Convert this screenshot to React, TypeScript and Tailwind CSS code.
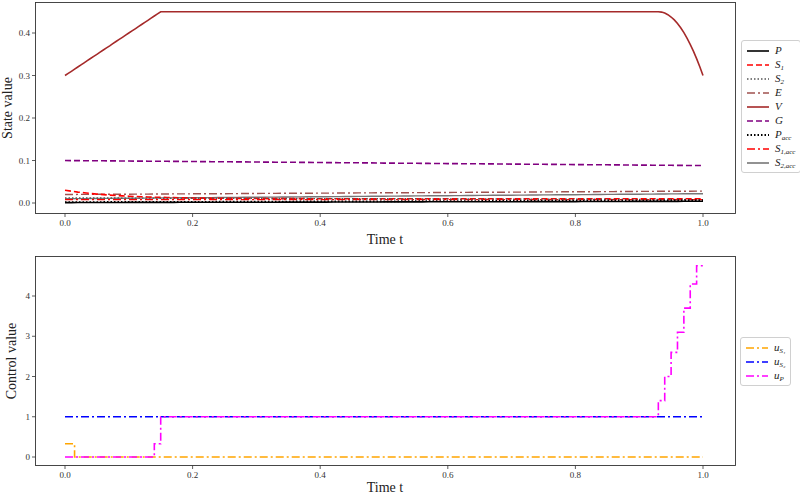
import React from "react";

const X = (t: number) => 65 + t * 638;
const Y1 = (v: number) => 203 - v * 425;
const Y2 = (v: number) => 457 - v * 40.25;

function line(f: (t: number) => number, Y: (v: number) => number, n = 100) {
  const pts: string[] = [];
  for (let i = 0; i <= n; i++) {
    const t = i / n;
    pts.push(`${X(t).toFixed(1)},${Y(f(t)).toFixed(1)}`);
  }
  return pts.join(" ");
}

function steps(s: [number, number][], Y: (v: number) => number) {
  const pts: string[] = [];
  for (let i = 0; i < s.length; i++) {
    const [t, v] = s[i];
    const tn = i + 1 < s.length ? s[i + 1][0] : 1;
    pts.push(`${X(t)},${Y(v)}`, `${X(tn)},${Y(v)}`);
  }
  return pts.join(" ");
}

const V = (t: number) => {
  if (t < 0.15) return 0.3 + t;
  if (t < 0.93) return 0.45;
  const u = (t - 0.93) / 0.07;
  return 0.45 - 0.15 * u * u;
};

const FF = '"Liberation Serif", "DejaVu Serif", serif';
const serif = { fontFamily: FF };

function Legend({ items }: { items: { c: string; d?: string; w?: number; label: React.ReactNode }[] }) {
  return (
    <div className="flex flex-col gap-[1px] rounded-[3px] border border-[#d0d0d0] bg-white px-[5px] py-[3px]" style={serif}>
      {items.map((it, i) => (
        <div key={i} className="flex h-[13px] items-center gap-[6px]">
          <svg width="22" height="6">
            <line x1="0" y1="3" x2="22" y2="3" stroke={it.c} strokeWidth={it.w ?? 1.6} strokeDasharray={it.d} />
          </svg>
          <span className="text-[11px] italic leading-none text-[#222]" style={serif}>{it.label}</span>
        </div>
      ))}
    </div>
  );
}

const sub = (a: string, b: string) => (
  <>
    {a}
    <sub className="text-[7px]" style={serif}>{b}</sub>
  </>
);

export default function App() {
  const yt1 = [0, 0.1, 0.2, 0.3, 0.4];
  const yt2 = [0, 1, 2, 3, 4];
  const xt = [0, 0.2, 0.4, 0.6, 0.8, 1];
  const up: [number, number][] = [
    [0, 0], [0.14, 0.33], [0.15, 1], [0.93, 1.4], [0.94, 2], [0.95, 2.6], [0.96, 3.1], [0.97, 3.7], [0.98, 4.3], [0.99, 4.75],
  ];
  return (
    <div className="relative h-[494px] w-[800px] overflow-hidden bg-white" style={serif}>
      <svg width="800" height="494" className="absolute left-0 top-0" fontFamily={FF} style={serif}>
        <rect x="35.5" y="2.5" width="700" height="211" fill="none" stroke="#333" strokeWidth="0.9" />
        {yt1.map((v) => (
          <g key={v}>
            <line x1="32" x2="35.5" y1={Y1(v)} y2={Y1(v)} stroke="#333" strokeWidth="0.8" />
            <text x="30" y={Y1(v) + 3} textAnchor="end" fontSize="9" fill="#333">{v.toFixed(1)}</text>
          </g>
        ))}
        {xt.map((t) => (
          <g key={t}>
            <line x1={X(t)} x2={X(t)} y1="213.5" y2="217" stroke="#333" strokeWidth="0.8" />
            <text x={X(t)} y="226" textAnchor="middle" fontSize="9" fill="#333">{t.toFixed(1)}</text>
          </g>
        ))}
        <text x="385" y="244" textAnchor="middle" fontSize="14" fill="#222">Time t</text>
        <text x="12" y="108" textAnchor="middle" fontSize="14" fill="#222" transform="rotate(-90 12 108)">State value</text>
        <polyline points={line((t) => 0.1 - 0.012 * t, Y1)} fill="none" stroke="#800080" strokeWidth="1.6" strokeDasharray="6 3" />
        <polyline points={line((t) => 0.02 + 0.008 * t, Y1)} fill="none" stroke="#a0524f" strokeWidth="1.4" strokeDasharray="8 3 2 3" />
        <polyline points={line((t) => 0.01 + 0.012 * t, Y1)} fill="none" stroke="#777" strokeWidth="1.4" />
        <polyline points={line((t) => 0.01 + 0.02 * Math.exp(-t * 12), Y1)} fill="none" stroke="#ff0000" strokeWidth="1.6" strokeDasharray="6 3" />
        <polyline points={line(() => 0.008, Y1)} fill="none" stroke="#ff0000" strokeWidth="1.4" strokeDasharray="8 3 2 3" />
        <polyline points={line((t) => 0.012 - 0.004 * t, Y1)} fill="none" stroke="#555" strokeWidth="1.4" strokeDasharray="1.5 2" />
        <polyline points={line((t) => 0.002 + 0.004 * t, Y1)} fill="none" stroke="#000" strokeWidth="1.8" strokeDasharray="1.5 2" />
        <polyline points={line((t) => 0.001 + 0.003 * t, Y1)} fill="none" stroke="#000" strokeWidth="1.6" />
        <polyline points={line(V, Y1, 200)} fill="none" stroke="#a52a2a" strokeWidth="1.6" />

        <rect x="35.5" y="256.5" width="700" height="209" fill="none" stroke="#333" strokeWidth="0.9" />
        {yt2.map((v) => (
          <g key={v}>
            <line x1="32" x2="35.5" y1={Y2(v)} y2={Y2(v)} stroke="#333" strokeWidth="0.8" />
            <text x="30" y={Y2(v) + 3} textAnchor="end" fontSize="9" fill="#333">{v}</text>
          </g>
        ))}
        {xt.map((t) => (
          <g key={t}>
            <line x1={X(t)} x2={X(t)} y1="465.5" y2="469" stroke="#333" strokeWidth="0.8" />
            <text x={X(t)} y="478" textAnchor="middle" fontSize="9" fill="#333">{t.toFixed(1)}</text>
          </g>
        ))}
        <text x="385" y="492" textAnchor="middle" fontSize="14" fill="#222">Time t</text>
        <text x="16" y="361" textAnchor="middle" fontSize="14" fill="#222" transform="rotate(-90 16 361)">Control value</text>
        <polyline points={steps([[0, 0.33], [0.015, 0]], Y2)} fill="none" stroke="#ffa500" strokeWidth="1.6" strokeDasharray="8 3 2 3" />
        <polyline points={steps([[0, 1]], Y2)} fill="none" stroke="#0000ff" strokeWidth="1.6" strokeDasharray="8 3 2 3" />
        <polyline points={steps(up, Y2)} fill="none" stroke="#ff00ff" strokeWidth="1.6" strokeDasharray="8 3 2 3" />
      </svg>

      <div className="absolute left-[741px] top-[40px]">
        <Legend
          items={[
            { c: "#000", label: "P" },
            { c: "#ff0000", d: "6 3", label: sub("S", "1") },
            { c: "#555", d: "1.5 2", label: sub("S", "2") },
            { c: "#a0524f", d: "8 3 2 3", label: "E" },
            { c: "#a52a2a", label: "V" },
            { c: "#800080", d: "6 3", label: "G" },
            { c: "#000", d: "1.5 2", w: 2, label: sub("P", "acc") },
            { c: "#ff0000", d: "8 3 2 3", label: sub("S", "1,acc") },
            { c: "#777", label: sub("S", "2,acc") },
          ]}
        />
      </div>
      <div className="absolute left-[740px] top-[337px]">
        <Legend
          items={[
            { c: "#ffa500", d: "8 3 2 3", label: sub("u", "S₁") },
            { c: "#0000ff", d: "8 3 2 3", label: sub("u", "S₂") },
            { c: "#ff00ff", d: "8 3 2 3", label: sub("u", "P") },
          ]}
        />
      </div>
    </div>
  );
}
